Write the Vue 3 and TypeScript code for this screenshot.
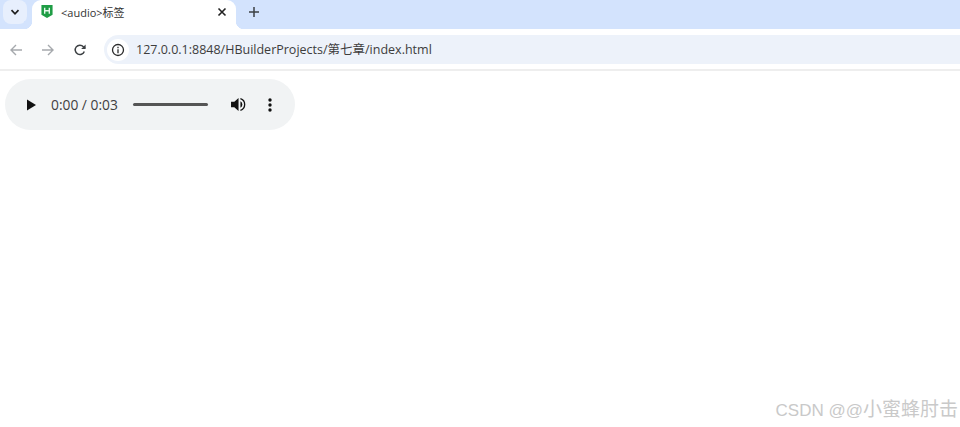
<template>
  <div class="page">
    <div class="tab-strip">
      <div class="tab-search">
        <svg width="10" height="10" viewBox="0 0 10 10"><path d="M1.5 3.2 5 6.8l3.5-3.6" fill="none" stroke="#1f1f1f" stroke-width="1.7" /></svg>
      </div>
      <div class="tab">
        <svg class="favicon" width="12" height="13" viewBox="0 0 12 14">
          <path d="M0 0h12v10.5L6 14 0 10.500z" fill="#1f9d45" />
          <path d="M3.500 3v6.500M8.500 3v6.500M3.500 6.200h5" fill="none" stroke="#e8f8ec" stroke-width="1.500" />
        </svg>
        <span class="tab-title">&lt;audio&gt;标签</span>
        <svg class="tab-close" width="10" height="10" viewBox="0 0 10 10"><path d="M1.500 1.500l7 7M8.500 1.500l-7 7" stroke="#222" stroke-width="1.600" /></svg>
      </div>
      <svg class="new-tab" width="12" height="12" viewBox="0 0 12 12"><path d="M6 1v10M1 6h10" stroke="#3c4043" stroke-width="1.500" /></svg>
    </div>

    <div class="toolbar">
      <svg class="nav" width="14" height="14" viewBox="0 0 14 14"><path d="M13 7H2M7 2 2 7l5 5" fill="none" stroke="#a6a9ad" stroke-width="1.400" /></svg>
      <svg class="nav" width="14" height="14" viewBox="0 0 14 14"><path d="M1 7h11M7 2l5 5-5 5" fill="none" stroke="#a6a9ad" stroke-width="1.400" /></svg>
      <svg class="nav" width="14" height="14" viewBox="0 0 14 14">
        <path d="M11.300 8.500A4.700 4.700 0 1 1 10.400 3.700L12 5.300" fill="none" stroke="#3c4043" stroke-width="1.500" />
        <path d="M12.600 1.500v4.400H8.200z" fill="#3c4043" />
      </svg>
      <div class="omnibox">
        <div class="site-info">
          <svg width="14" height="14" viewBox="0 0 14 14">
            <circle cx="7" cy="7" r="5.500" fill="none" stroke="#2b2b2b" stroke-width="1.300" />
            <path d="M7 6.200v4M7 3.800v1.400" stroke="#2b2b2b" stroke-width="1.300" />
          </svg>
        </div>
        <span class="url">127.0.0.1:8848/HBuilderProjects/第七章/index.html</span>
      </div>
    </div>
    <div class="divider"></div>

    <div class="content">
      <div class="player">
        <svg class="play" width="9" height="12" viewBox="0 0 10 12"><path d="M0 0l10 6-10 6z" fill="#111" /></svg>
        <span class="time">{{ current }} / {{ total }}</span>
        <div class="track"></div>
        <svg class="volume" width="16" height="15" viewBox="0 0 17 16">
          <path d="M0 5h3.500L8 1v14l-4.500-4H0z" fill="#111" />
          <path d="M10 4.500a4 4 0 0 1 0 7z" fill="#111" />
          <path d="M10 1.800a6.500 6.500 0 0 1 0 12.400" fill="none" stroke="#111" stroke-width="1.400" />
        </svg>
        <svg class="more" width="4" height="14" viewBox="0 0 4 14">
          <circle cx="2" cy="2" r="1.700" fill="#111" />
          <circle cx="2" cy="7" r="1.700" fill="#111" />
          <circle cx="2" cy="12" r="1.700" fill="#111" />
        </svg>
      </div>
    </div>

    <div class="watermark">CSDN @@<span class="watermark-name">小蜜蜂肘击</span></div>
  </div>
</template>

<script setup lang="ts">
const current = '0:00'
const total = '0:03'
</script>

<style>
html,
body {
  margin: 0;
  background: #ffffff;
  overflow: hidden;
}
</style>

<style scoped>
.page {
  position: relative;
  width: 960px;
  height: 427px;
  overflow: hidden;
  font-family: "Open Sans", "Noto Sans CJK SC", sans-serif;
  color: #3c4043;
}
.tab-strip {
  display: flex;
  align-items: flex-end;
  height: 29px;
  background: #d3e3fd;
}
.tab-search {
  display: flex;
  align-items: center;
  justify-content: center;
  width: 24px;
  height: 24px;
  margin: 0 5px 5px 3px;
  border-radius: 8px;
  background: #e7effd;
}
.tab {
  position: relative;
  display: flex;
  align-items: center;
  width: 204px;
  height: 29px;
  box-sizing: border-box;
  padding: 0 9px 5px 9px;
  background: #ffffff;
  border-radius: 9px 9px 0 0;
}
.tab::before,
.tab::after {
  content: "";
  position: absolute;
  bottom: 0;
  width: 8px;
  height: 8px;
}
.tab::before {
  left: -8px;
  background: radial-gradient(circle at 0 0, #d3e3fd 8px, #ffffff 8.500px);
}
.tab::after {
  right: -8px;
  background: radial-gradient(circle at 100% 0, #d3e3fd 8px, #ffffff 8.500px);
}
.favicon {
  flex: none;
  margin-bottom: 1px;
}
.tab-title {
  flex: 1;
  margin-left: 8px;
  font-size: 11px;
  color: #333333;
}
.new-tab {
  margin: 0 0 11px 12px;
}
.toolbar {
  display: flex;
  align-items: center;
  height: 40px;
  box-sizing: border-box;
  padding: 1px 0 0 9px;
  gap: 18px;
  background: #ffffff;
}
.nav {
  flex: none;
}
.omnibox {
  display: flex;
  align-items: center;
  flex: 1;
  height: 29px;
  margin-left: -1px;
  padding-left: 3px;
  border-radius: 15px 0 0 15px;
  background: #edf2fa;
}
.site-info {
  display: flex;
  align-items: center;
  justify-content: center;
  width: 22px;
  height: 22px;
  border-radius: 50%;
  background: #ffffff;
}
.url {
  margin: 0 0 2px 7px;
  font-size: 12.500px;
  color: #3d3d3d;
  white-space: nowrap;
}
.divider {
  height: 2px;
  background: #eeeeee;
}
.content {
  padding: 8px 5px;
}
.player {
  display: flex;
  align-items: center;
  width: 290px;
  height: 51px;
  box-sizing: border-box;
  padding-left: 22px;
  border-radius: 26px;
  background: #f1f3f4;
}
.play {
  flex: none;
}
.time {
  margin-left: 15px;
  width: 82px;
  font-size: 13.800px;
  color: #404040;
  white-space: nowrap;
}
.track {
  width: 75px;
  height: 3px;
  border-radius: 2px;
  background: #555555;
}
.volume {
  flex: none;
  margin-left: 23px;
}
.more {
  flex: none;
  margin-left: 21px;
}
.watermark {
  position: absolute;
  right: 2px;
  bottom: 6px;
  font-family: "Liberation Sans", "Noto Sans CJK SC", sans-serif;
  font-size: 17px;
  color: #c9c9c9;
  white-space: nowrap;
}
.watermark-name {
  font-size: 19px;
}
</style>
